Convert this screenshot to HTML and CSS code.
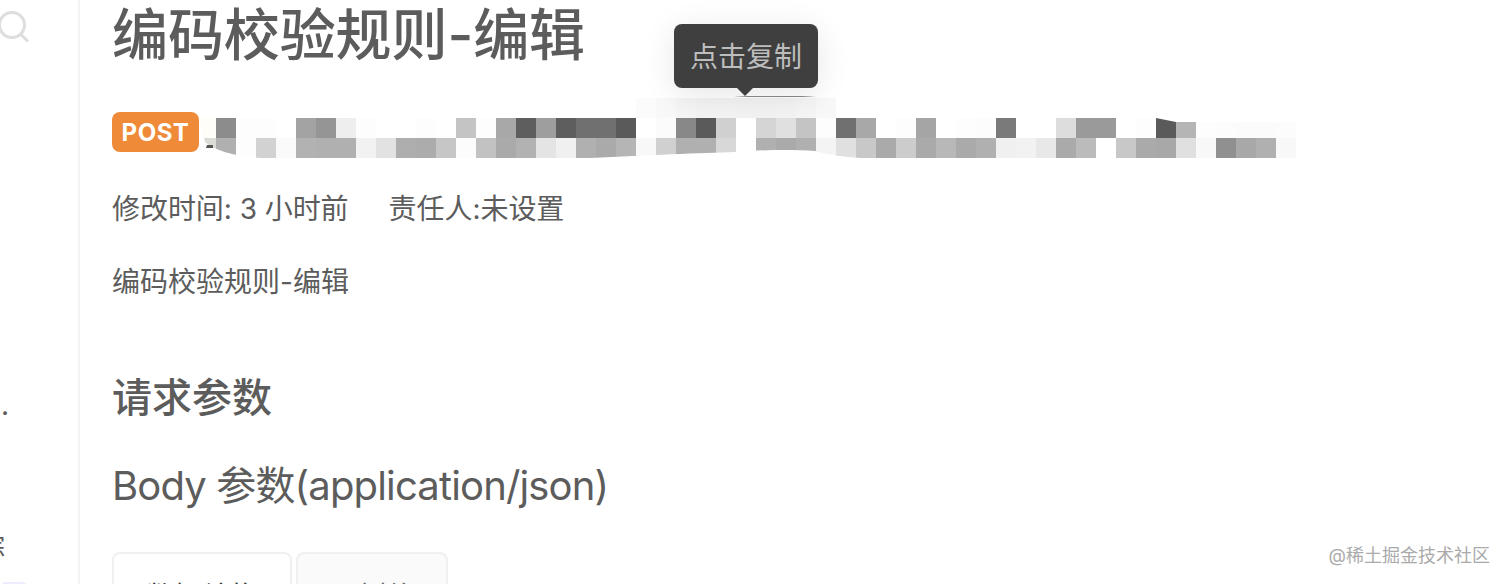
FILE: index.html
```html
<!DOCTYPE html>
<html>
<head>
	<meta charset="utf-8">
	<title>编码校验规则-编辑</title>
	<link rel="stylesheet" href="styles.css">
</head>
<body>
	<div class="page">
		<div class="sidebar">
			<svg class="searchIcon" width="32" height="34" viewBox="0 0 32 34">
				<circle cx="14" cy="14" r="12.5"/>
				<path d="M23 23.500L30 30.500"/>
			</svg>
			<span class="cutDot">.</span>
			<span class="cutChar">综</span>
			<span class="cutPill"></span>
		</div>
		<div class="content">
			<h1 class="title">编码校验规则-编辑</h1>
			<div class="urlRow">
				<span class="method">POST</span>
				<svg class="mosaic" width="1100" height="64" viewBox="199 96 1100 64">
					<defs>
						<clipPath id="smear">
							<path d="M199 118H1156L1176 122L1296 122V158H860C845 157 830 155 815 151C790 149 760 150 735 152C700 153 650 155 590 158H260C235 156 215 151 205 142Z"/>
						</clipPath>
					</defs>
					<g class="faint">
						<rect x="636" y="98" fill="#fbfbfb"/>
						<rect x="656" y="98" fill="#f8f8f8"/>
						<rect x="676" y="98" fill="#f5f5f5"/>
						<rect x="696" y="98" fill="#f3f3f3"/>
						<rect x="716" y="98" fill="#f3f3f3"/>
						<rect x="736" y="98" fill="#f2f2f2"/>
						<rect x="756" y="98" fill="#f2f2f2"/>
						<rect x="776" y="98" fill="#f3f3f3"/>
						<rect x="796" y="98" fill="#f5f5f5"/>
						<rect x="816" y="98" fill="#f8f8f8"/>
					</g>
					<g clip-path="url(#smear)">
						<g class="cells" transform="translate(0,118)">
							<rect x="196" fill="#fffdf8"/>
							<rect x="216" fill="#8c8c8c"/>
							<rect x="236" fill="#fdfdfd"/>
							<rect x="256" fill="#fdfdfd"/>
							<rect x="296" fill="#a3a3a3"/>
							<rect x="316" fill="#959595"/>
							<rect x="336" fill="#eeeeee"/>
							<rect x="356" fill="#fdfdfd"/>
							<rect x="416" fill="#fdfdfd"/>
							<rect x="456" fill="#c4c4c4"/>
							<rect x="476" fill="#fdfdfd"/>
							<rect x="496" fill="#a8a8a8"/>
							<rect x="516" fill="#5e5e5e"/>
							<rect x="536" fill="#9e9e9e"/>
							<rect x="556" fill="#5e5e5e"/>
							<rect x="576" fill="#707070"/>
							<rect x="596" fill="#707070"/>
							<rect x="616" fill="#5a5a5a"/>
							<rect x="656" fill="#fbfbfb"/>
							<rect x="676" fill="#888888"/>
							<rect x="696" fill="#5a5a5a"/>
							<rect x="716" fill="#d0d0d0"/>
							<rect x="756" fill="#d5d5d5"/>
							<rect x="776" fill="#e0e0e0"/>
							<rect x="796" fill="#c4c4c4"/>
							<rect x="816" fill="#fdfdfd"/>
							<rect x="836" fill="#707070"/>
							<rect x="856" fill="#a8a8a8"/>
							<rect x="896" fill="#fdfdfd"/>
							<rect x="916" fill="#a5a5a5"/>
							<rect x="956" fill="#fdfdfd"/>
							<rect x="976" fill="#fcfcfc"/>
							<rect x="996" fill="#7a7a7a"/>
							<rect x="1056" fill="#dddddd"/>
							<rect x="1076" fill="#9a9a9a"/>
							<rect x="1096" fill="#9a9a9a"/>
							<rect x="1136" fill="#fdfdfd"/>
							<rect x="1156" fill="#5a5a5a"/>
							<rect x="1176" fill="#b5b5b5"/>
							<rect x="1196" fill="#fdfdfd"/>
							<rect x="1216" fill="#fcfcfc"/>
							<rect x="1236" fill="#fbfbfb"/>
							<rect x="1256" fill="#fbfbfb"/>
							<rect x="1276" fill="#fcfcfc"/>
						</g>
						<g class="cells" transform="translate(0,138)">
							<rect x="196" fill="#dcdcd6"/>
							<rect x="216" fill="#b0b0b0"/>
							<rect x="236" fill="#fdfdfd"/>
							<rect x="256" fill="#d2d2d2"/>
							<rect x="276" fill="#fafafa"/>
							<rect x="296" fill="#b2b2b2"/>
							<rect x="316" fill="#b0b0b0"/>
							<rect x="336" fill="#b0b0b0"/>
							<rect x="356" fill="#f2f2f2"/>
							<rect x="376" fill="#e2e2e2"/>
							<rect x="396" fill="#aeaeae"/>
							<rect x="416" fill="#acacac"/>
							<rect x="436" fill="#c6c6c6"/>
							<rect x="456" fill="#fcfcfc"/>
							<rect x="476" fill="#c2c2c2"/>
							<rect x="496" fill="#aaaaaa"/>
							<rect x="516" fill="#b2b2b2"/>
							<rect x="536" fill="#e4e4e4"/>
							<rect x="556" fill="#f0f0f0"/>
							<rect x="576" fill="#b0b0b0"/>
							<rect x="596" fill="#aaaaaa"/>
							<rect x="616" fill="#b5b5b5"/>
							<rect x="636" fill="#f8f8f8"/>
							<rect x="656" fill="#d0d0d0"/>
							<rect x="676" fill="#b0b0b0"/>
							<rect x="696" fill="#b0b0b0"/>
							<rect x="716" fill="#d8d8d8"/>
							<rect x="756" fill="#b0b0b0"/>
							<rect x="776" fill="#aaaaaa"/>
							<rect x="796" fill="#b0b0b0"/>
							<rect x="816" fill="#f4f4f4"/>
							<rect x="836" fill="#e0e0e0"/>
							<rect x="856" fill="#c8c8c8"/>
							<rect x="876" fill="#aaaaaa"/>
							<rect x="896" fill="#cccccc"/>
							<rect x="916" fill="#aaaaaa"/>
							<rect x="936" fill="#b8b8b8"/>
							<rect x="956" fill="#aaaaaa"/>
							<rect x="976" fill="#b0b0b0"/>
							<rect x="996" fill="#f0f0f0"/>
							<rect x="1016" fill="#f2f2f2"/>
							<rect x="1036" fill="#e8e8e8"/>
							<rect x="1056" fill="#aaaaaa"/>
							<rect x="1076" fill="#bbbbbb"/>
							<rect x="1116" fill="#c8c8c8"/>
							<rect x="1136" fill="#aaaaaa"/>
							<rect x="1156" fill="#a8a8a8"/>
							<rect x="1176" fill="#e0e0e0"/>
							<rect x="1196" fill="#f8f8f8"/>
							<rect x="1216" fill="#909090"/>
							<rect x="1236" fill="#a8a8a8"/>
							<rect x="1256" fill="#b0b0b0"/>
							<rect x="1276" fill="#f8f8f8"/>
						</g>
					</g>
					<path d="M206 148L207 145H213V148Z" fill="#555555"/>
					<path d="M734 97C750 95 800 95 816 97Z" fill="#8a8a8a"/>
					<rect x="1201" y="122" width="2" height="1" fill="#777777"/>
					<rect x="1230" y="122" width="2" height="2" fill="#888888"/>
					<rect x="1262" y="122" width="3" height="2" fill="#777777"/>
					<rect x="1268" y="121" width="3" height="3" fill="#777777"/>
					<rect x="1278" y="123" width="2" height="1" fill="#888888"/>
				</svg>
				<div class="tip">点击复制</div>
			</div>
			<p class="meta"><span>修改时间: 3 小时前</span><span>责任人:未设置</span></p>
			<p class="desc">编码校验规则-编辑</p>
			<h2 class="sectionTitle">请求参数</h2>
			<h3 class="bodyTitle">Body 参数(application/json)</h3>
			<div class="tabs">
				<div class="tab">数据结构</div>
				<div class="tab tabOff">示例值</div>
			</div>
		</div>
	</div>
	<div class="mark">@稀土掘金技术社区</div>
</body>
</html>
```

FILE: styles.css
```css
html, body, h1, h2, h3, p{
	padding: 0; margin: 0;
}
html, body{
	height: 584px;
	overflow: hidden;
}
body{
	background: #fff;
	color: #5c5c5c;
	font-family: Inter, "Noto Sans CJK SC", sans-serif;
}
.page{
	display: flex;
	height: 584px;
	overflow: hidden;
}
.sidebar{
	display: flex;
	flex-direction: column;
	align-items: flex-start;
	flex: none;
	width: 78px;
	height: 584px;
	border-right: 2px solid #f3f3f3;
	overflow: hidden;
}
.sidebar > *{
	flex: none;
}
.searchIcon{
	margin: 11px 0 0 -2px;
	fill: none;
	stroke: #dedede;
	stroke-width: 3;
}
.cutDot{
	margin: 345px 0 0 1px;
	font-size: 28px;
	line-height: 30px;
}
.cutChar{
	margin: 111px 0 0 -21px;
	font-size: 26px;
	line-height: 32px;
}
.cutPill{
	width: 28px;
	height: 12px;
	margin-top: 19px;
	background: #efebff;
	border-radius: 10px;
}
.content{
	flex: 1;
	padding-left: 32px;
}
.title{
	font-size: 56px;
	line-height: 70px;
	font-weight: 500;
	letter-spacing: -.1px;
}
.urlRow{
	position: relative;
	display: flex;
	align-items: flex-start;
	margin-top: 26px;
	height: 64px;
}
.method{
	width: 87px;
	height: 40px;
	margin-top: 16px;
	flex: none;
	background: #ee8a38;
	border-radius: 8px;
	color: #fff;
	font-size: 24px;
	line-height: 42px;
	font-weight: 700;
	letter-spacing: .5px;
	text-align: center;
}
.mosaic{
	flex: none;
}
.mosaic rect{
	width: 20px;
	height: 20px;
}
.mosaic > rect{
	width: auto;
	height: auto;
}
.tip{
	position: absolute;
	left: 562px;
	top: -72px;
	width: 144px;
	height: 64px;
	background: #3f3f3f;
	border-radius: 8px;
	box-shadow: 0 6px 32px rgba(0, 0, 0, .1);
	color: #bdbdbd;
	font-size: 28px;
	line-height: 66px;
	text-align: center;
}
.tip:after{
	content: "";
	position: absolute;
	left: 63px;
	top: 64px;
	border: 8px solid transparent;
	border-top-color: #3f3f3f;
	border-bottom: 0;
}
.meta{
	margin-top: 25px;
	font-size: 28px;
	line-height: 48px;
	letter-spacing: -.05px;
}
.meta span + span{
	margin-left: 40px;
}
.desc{
	margin-top: 25px;
	font-size: 28px;
	line-height: 48px;
}
.sectionTitle{
	margin-top: 64px;
	font-size: 40px;
	line-height: 56px;
	font-weight: 500;
}
.bodyTitle{
	margin-top: 32px;
	font-size: 40px;
	line-height: 56px;
	font-weight: 400;
	letter-spacing: -.85px;
}
.tabs{
	display: flex;
	gap: 4px;
	margin-top: 38px;
}
.tab{
	width: 180px;
	height: 90px;
	box-sizing: border-box;
	border: 2px solid #f0f0f0;
	border-radius: 8px 8px 0 0;
	background: #fff;
	color: #333;
	font-size: 28px;
	line-height: 86px;
	text-align: center;
}
.tabOff{
	width: 152px;
	background: #fafafa;
	color: #666;
}
.mark{
	position: absolute;
	right: 18px;
	bottom: 16px;
	color: #aaa;
	font-size: 18px;
	line-height: 24px;
}
```
